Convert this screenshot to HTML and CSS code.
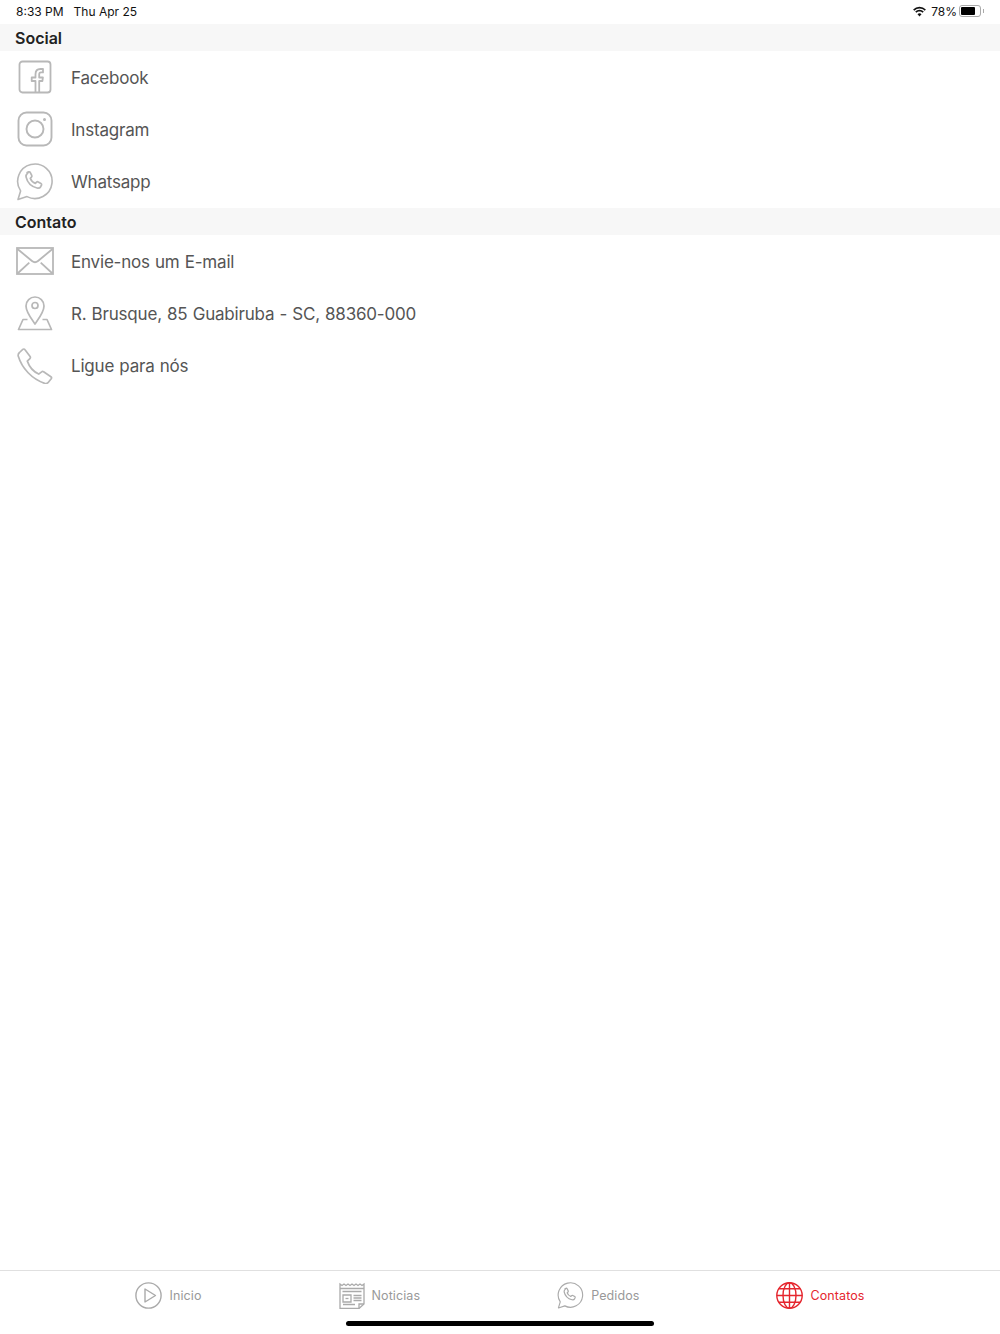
FILE: index.html
```html
<!DOCTYPE html>
<html lang="en">
<head>
    <meta charset="UTF-8">
    <meta name="viewport" content="width=device-width, initial-scale=1.0">
    <title>Contatos</title>
    <link rel="stylesheet" href="styles.css">
</head>
<body>
    <svg class="defs" width="0" height="0">
        <symbol id="whatsapp" viewBox="0 0 38 38">
            <path d="M2 36.500l2.600-8.600A17.200 17.200 0 1 1 11 33.600z" fill="none" stroke="currentColor" stroke-width="1.600" stroke-linejoin="round"/>
            <path transform="translate(-1 .8) scale(.92)" d="M13.200 9.600l1.700-.8c.8-.3 1.300 0 1.700.7l1.600 3.200c.3.700.2 1.200-.3 1.700l-1.300 1.300c.9 2.500 2.900 4.600 5.500 5.600l1.400-1.400c.5-.5 1-.6 1.700-.2l3 1.700c.7.400.9 1 .6 1.700l-.9 1.800c-.8 1.300-2.300 1.800-3.900 1.400-6.100-1.500-10.600-6-12-12.100-.3-1.500.6-3.100 2.200-4.600z" fill="none" stroke="currentColor" stroke-width="1.900" stroke-linejoin="round"/>
        </symbol>
    </svg>

    <div class="status-bar">
        <div class="status-left"><span>8:33 PM</span><span>Thu Apr 25</span></div>
        <div class="status-right">
            <svg width="15" height="11" viewBox="0 0 15 11"><path d="M7.500 2.600c2 0 3.800.8 5.200 2.100l1.200-1.300A9.400 9.400 0 0 0 7.500.8 9.400 9.400 0 0 0 1.100 3.400l1.200 1.300A7.500 7.500 0 0 1 7.500 2.600z" fill="#111"/><path d="M7.500 5.600c1.200 0 2.300.5 3.100 1.200l1.200-1.300a6.300 6.300 0 0 0-8.600 0l1.200 1.300c.8-.7 1.900-1.200 3.100-1.200z" fill="#111"/><path d="M7.500 10.500l2-2.200a2.900 2.900 0 0 0-4 0z" fill="#111"/></svg>
            <span class="battery-text">78%</span>
            <div class="battery"><div class="battery-level"></div></div>
            <div class="battery-tip"></div>
        </div>
    </div>

    <div class="content">
        <div class="section-title">Social</div>
        <div class="row">
            <div class="row-icon">
                <svg width="34" height="34" viewBox="0 0 34 34" fill="none" stroke="currentColor" stroke-width="1.800"><rect x="1.500" y="1.500" width="31" height="31" rx="3"/><path d="M17.500 32.500V21h-3.800v-3.500h3.800v-3.200c0-3.400 2-5.300 4.900-5.300h2.600v3.400h-2c-1.300 0-1.800.7-1.800 2v3.100h3.700l-.5 3.500h-3.200v11.500" stroke-linejoin="round"/></svg>
            </div>
            <span>Facebook</span>
        </div>
        <div class="row">
            <div class="row-icon">
                <svg width="36" height="36" viewBox="0 0 36 36" fill="none" stroke="currentColor" stroke-width="1.900"><rect x="1.500" y="1.500" width="33" height="33" rx="8"/><circle cx="18" cy="18" r="8.500"/><circle cx="27.500" cy="8.500" r="1.500" fill="currentColor" stroke="none"/></svg>
            </div>
            <span>Instagram</span>
        </div>
        <div class="row">
            <div class="row-icon"><svg width="38" height="38"><use href="#whatsapp"/></svg></div>
            <span>Whatsapp</span>
        </div>

        <div class="section-title">Contato</div>
        <div class="row">
            <div class="row-icon">
                <svg width="38" height="28" viewBox="0 0 38 28" fill="none" stroke="currentColor" stroke-width="1.800"><rect x="1" y="1" width="36" height="26"/><path d="M1.500 2l14.500 12c1.800 1.500 4.200 1.500 6 0l14.500-12M1.500 26.500l11.800-10.800M36.500 26.500L24.700 15.700"/></svg>
            </div>
            <span>Envie-nos um E-mail</span>
        </div>
        <div class="row">
            <div class="row-icon">
                <svg width="36" height="36" viewBox="0 0 36 36" fill="none" stroke="currentColor" stroke-width="1.700"><path d="M18 29c-4.500-6.500-9-12-9-18a9 9 0 0 1 18 0c0 6-4.500 11.500-9 18z" stroke-linejoin="round"/><circle cx="18" cy="10.500" r="3"/><path d="M10.500 24.500H6L1.500 34.500h33L30 24.500h-4.500" stroke-linejoin="round"/></svg>
            </div>
            <span>R. Brusque, 85 Guabiruba - SC, 88360-000</span>
        </div>
        <div class="row">
            <div class="row-icon">
                <svg width="36" height="36" viewBox="0 0 36 36" fill="none" stroke="currentColor" stroke-width="1.700" stroke-linejoin="round"><path d="M2.500 4.500l3.300-3.100c.7-.6 1.500-.5 2 .2l5.300 7c.5.700.4 1.400-.2 2l-2.600 2.500c1.800 5.200 6.500 10.600 11.400 13l2.900-2.300c.6-.5 1.400-.5 2 0l7.300 4.900c.7.500.8 1.300.3 2l-2.800 3.500c-1 1.200-2.300 1.600-3.700 1.200C15 31 5 20.500 1.300 8.300c-.4-1.400 0-2.800 1.200-3.800z"/></svg>
            </div>
            <span>Ligue para nós</span>
        </div>
    </div>

    <div class="tab-bar">
        <div class="tabs">
            <div class="tab">
                <svg width="27" height="27" viewBox="0 0 27 27" fill="none" stroke="currentColor" stroke-width="1.400"><circle cx="13.500" cy="13.500" r="12.600"/><path d="M10 7l10.500 6.500L10 20z" stroke-linejoin="round"/></svg>
                <span>Inicio</span>
            </div>
            <div class="tab">
                <svg width="26" height="27" viewBox="0 0 26 27" fill="none" stroke="currentColor" stroke-width="1.300"><path d="M1 2l2 1.500L5 2l2 1.500L9 2l2 1.500L13 2l2 1.500L17 2l2 1.500L21 2l2 1.500L25 2v20l-5 4.500H1z"/><path d="M1 6.500h24M3.500 9.500h19M4 13h8v7H4zM14.500 13.500h8M14.500 16h8M14.500 18.500h8M4 22.500h12M20 26.500v-4.500h5"/><path d="M6.500 16.500h3"/></svg>
                <span>Noticias</span>
            </div>
            <div class="tab">
                <svg width="27" height="27"><use href="#whatsapp"/></svg>
                <span>Pedidos</span>
            </div>
            <div class="tab active">
                <svg width="27" height="27" viewBox="0 0 27 27" fill="none" stroke="currentColor" stroke-width="1.400"><circle cx="13.500" cy="13.500" r="12.700"/><ellipse cx="13.500" cy="13.500" rx="6.500" ry="12.700"/><path d="M13.500.8v25.400M.8 13.500h25.400M2.800 6.800h21.400M2.800 20.200h21.400"/></svg>
                <span>Contatos</span>
            </div>
        </div>
        <div class="home-indicator"></div>
    </div>
</body>
</html>
```

FILE: styles.css
```css
body {
    font-family: Inter, "Liberation Sans", sans-serif;
    display: flex;
    flex-direction: column;
    height: 100vh;
    margin: 0;
    background-color: #fff;
    color: #555;
}
.defs {
    display: block;
    height: 0;
}
.status-bar {
    display: flex;
    justify-content: space-between;
    align-items: center;
    height: 24px;
    padding: 0 16px 2px 16px;
    box-sizing: border-box;
    font-size: 12px;
    color: #111;
}
.status-left {
    display: flex;
    gap: 10px;
}
.status-right {
    display: flex;
    align-items: center;
    gap: 5px;
}
.battery-text {
    margin-left: -1px;
}
.battery {
    width: 22px;
    height: 12px;
    margin-left: -3px;
    padding: 1px;
    border: 1px solid #aaa;
    border-radius: 3px;
    box-sizing: border-box;
}
.battery-level {
    width: 78%;
    height: 100%;
    background-color: #000;
    border-radius: 1px;
}
.battery-tip {
    width: 1px;
    height: 4px;
    margin-left: -3px;
    background-color: #aaa;
}
.content {
    flex: 1;
}
.section-title {
    height: 27px;
    line-height: 29px;
    padding-left: 15px;
    font-size: 16px;
    font-weight: 600;
    color: #222;
    background-color: #f7f7f7;
}
.row {
    display: flex;
    align-items: center;
    height: 52.300px;
    font-size: 17px;
    letter-spacing: -0.2px;
    word-spacing: 0.6px;
    color: #555;
}
.row span {
    padding-top: 1px;
}
.row-icon {
    display: flex;
    justify-content: center;
    align-items: center;
    width: 40px;
    margin: 0 16px 0 15px;
    color: #b8b8b8;
}
.tab-bar {
    height: 63px;
    border-top: 1px solid #e0e0e0;
    background-color: #fff;
}
.tabs {
    display: flex;
    justify-content: center;
    gap: 137px;
    padding-top: 11px;
    height: 39px;
}
.tab {
    display: flex;
    align-items: center;
    gap: 7px;
    height: 27px;
    font-size: 12.500px;
    letter-spacing: 0.1px;
    color: #999;
}
.tab span {
    padding-bottom: 1px;
}
.tab svg {
    color: #aaa;
}
.tab.active,
.tab.active svg {
    color: #e5262e;
}
.home-indicator {
    width: 308px;
    height: 5px;
    margin: 0 auto;
    border-radius: 3px;
    background-color: #000;
}
```
